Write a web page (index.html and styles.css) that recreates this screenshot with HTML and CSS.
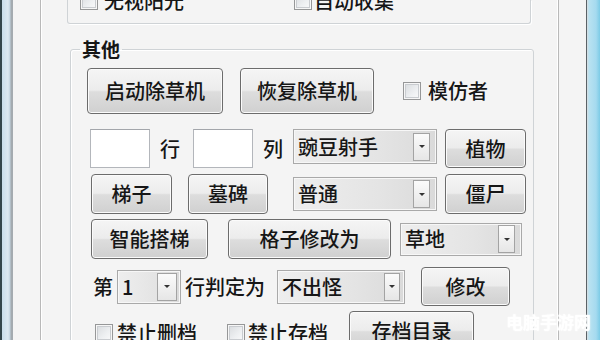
FILE: index.html
```html
<!DOCTYPE html>
<html lang="zh-CN">
<head>
<meta charset="utf-8">
<title>其他</title>
<link rel="stylesheet" href="styles.css">
</head>
<body>
<div class="screen">
  <div class="edge-left"></div>
  <div class="panel">
    <div class="inner">
      <div class="topgroup">
        <div class="toprow">
          <label class="check"><span class="box"></span><span class="txt">无视阳光</span></label>
          <label class="check second"><span class="box"></span><span class="txt">自动收集</span></label>
        </div>
      </div>
      <fieldset class="group">
        <legend>其他</legend>
        <div class="rows">
          <div class="row r1">
            <button class="btn b-start">启动除草机</button>
            <button class="btn b-restore">恢复除草机</button>
            <label class="check imitate"><span class="box"></span><span class="txt">模仿者</span></label>
          </div>
          <div class="row r2">
            <span class="field f1"></span>
            <span class="lbl l-row">行</span>
            <span class="field f2"></span>
            <span class="lbl l-col">列</span>
            <span class="combo c-plant"><span class="ctext">豌豆射手</span><span class="drop"><i></i></span></span>
            <button class="btn b-plant">植物</button>
          </div>
          <div class="row r3">
            <button class="btn b-ladder">梯子</button>
            <button class="btn b-tomb">墓碑</button>
            <span class="combo c-zombie"><span class="ctext">普通</span><span class="drop"><i></i></span></span>
            <button class="btn b-zombie">僵尸</button>
          </div>
          <div class="row r4">
            <button class="btn b-smart">智能搭梯</button>
            <button class="btn b-grid">格子修改为</button>
            <span class="combo c-ground"><span class="ctext">草地</span><span class="drop"><i></i></span></span>
          </div>
          <div class="row r5">
            <span class="lbl l-di">第</span>
            <span class="combo c-num"><span class="ctext">1</span><span class="drop"><i></i></span></span>
            <span class="lbl l-judge">行判定为</span>
            <span class="combo c-spawn"><span class="ctext">不出怪</span><span class="drop"><i></i></span></span>
            <button class="btn b-modify">修改</button>
          </div>
          <div class="row r6">
            <label class="check del"><span class="box"></span><span class="txt">禁止删档</span></label>
            <label class="check save"><span class="box"></span><span class="txt">禁止存档</span></label>
            <button class="btn b-dir">存档目录</button>
          </div>
        </div>
      </fieldset>
    </div>
  </div>
  <div class="edge-right"></div>
  <div class="watermark">电脑手游网</div>
</div>
</body>
</html>
```

FILE: styles.css
```css
* { box-sizing: border-box; }

html, body {
  margin: 0;
  padding: 0;
  width: 600px;
  height: 340px;
  overflow: hidden;
  background: #f3f3f3;
}

.screen {
  position: relative;
  display: flex;
  width: 600px;
  height: 340px;
  overflow: hidden;
  font-family: "Noto Sans CJK SC", "Noto Sans", sans-serif;
  font-size: 20px;
  font-weight: 500;
  line-height: 1;
  color: #161616;
}

.edge-left {
  width: 13px;
  flex: none;
  background: linear-gradient(to right,
    #34464c 0, #34464c 2px,
    #c9deec 2px, #dde9f2 8px, #c2d3df 10px,
    #a4abb0 11px, #a4abb0 13px);
}

.edge-right {
  width: 14px;
  flex: none;
  background: linear-gradient(to right,
    #5b6266 0, #5b6266 1px,
    #d9dde0 1px, #b9e2f1 3px, #a5daef 10px, #7ccbe6 14px);
}

.panel {
  width: 573px;
  flex: none;
  padding: 0 27px;
  background: #f4f4f4;
}

.inner {
  width: 519px;
  height: 340px;
  border-left: 1px solid #b9b9b9;
  border-right: 1px solid #b9b9b9;
  box-shadow: inset 1px 0 0 #ffffff, inset -1px 0 0 #ffffff;
  padding-left: 26px;
  display: flex;
  flex-direction: column;
  align-items: flex-start;
}

/* top (cut-off) group */
.topgroup {
  width: 464px;
  display: flex;
  flex-direction: column;
  border: 1px solid #cfd3d6;
  border-top: none;
  border-radius: 0 0 3px 3px;
  box-shadow: 1px 1px 0 #ffffff;
  padding: 0 0 12px 12px;
}

.toprow {
  display: flex;
  align-items: center;
  height: 20px;
  margin-top: -9px;
}

/* checkbox */
.check {
  display: flex;
  align-items: center;
  height: 20px;
  white-space: nowrap;
}
.check .box {
  width: 18px;
  height: 18px;
  flex: none;
  border: 1px solid #969798;
  background: linear-gradient(135deg, #d6d9dc 0%, #eef0f2 60%, #fbfbfb 100%);
  box-shadow: inset 0 0 0 1px #f6f6f6, inset 0 0 0 2px #c9ccd0;
}
.toprow .check .txt { margin-left: 6px; }
.toprow .second { margin-left: 110px; }
.toprow .second .txt { margin-left: 2px; }

/* "其他" group */
.group {
  width: 464px;
  margin: 15px 0 0 3px;
  padding: 0;
  min-width: 0;
  height: 320px;
  border: 1px solid #cfd3d6;
  border-radius: 3px;
  box-shadow: 1px 1px 0 #ffffff inset;
}
.group legend {
  margin-left: 9px;
  padding: 0 2px;
  line-height: 20px;
  height: 20px;
  font-size: 19px;
  font-weight: 700;
}

.rows {
  padding: 9px 0 0 16px;
  display: flex;
  flex-direction: column;
}

.row {
  display: flex;
  align-items: center;
  white-space: nowrap;
}

/* button */
.btn {
  flex: none;
  font-family: inherit;
  font-size: 20px;
  font-weight: 500;
  line-height: 1;
  color: #161616;
  padding: 0;
  border: 1px solid #6c6c6c;
  border-radius: 4px;
  background: linear-gradient(to bottom, #f5f5f5 0%, #ececec 48%, #dddddd 52%, #d0d0d0 100%);
  box-shadow: inset 0 0 0 1px #fbfbfb;
  height: 40px;
}

/* text field */
.field {
  flex: none;
  width: 60px;
  height: 39px;
  background: #ffffff;
  border: 1px solid #b3b6bb;
  border-top-color: #a3a6ab;
}

.lbl { flex: none; }

/* combobox */
.combo {
  flex: none;
  display: flex;
  align-items: center;
  height: 34px;
  border: 1px solid #a9a9a9;
  background: linear-gradient(to right, #eeeeee 0%, #e4e4e4 60%, #dadada 100%);
  box-shadow: inset 0 0 0 1px #f7f7f7;
}
.combo .ctext {
  flex: 1;
  padding-left: 4px;
}
.combo .drop {
  flex: none;
  width: 17px;
  height: 28px;
  margin-right: 6px;
  border: 1px solid #a3a3a3;
  background: linear-gradient(to bottom, #fbfbfb, #e6e6e6);
  display: flex;
  align-items: center;
  justify-content: center;
}
.combo .drop i {
  display: block;
  width: 0;
  height: 0;
  border-left: 3px solid transparent;
  border-right: 3px solid transparent;
  border-top: 3px solid #333333;
}

/* row 1 */
.r1 { height: 46px; }
.b-start { width: 136px; height: 46px; }
.b-restore { width: 134px; height: 46px; margin-left: 17px; }
.imitate { margin-left: 29px; }
.imitate .txt { margin-left: 7px; }

/* row 2 */
.r2 { height: 39px; margin-top: 15px; }
.f1 { margin-left: 3px; }
.l-row { margin-left: 10px; width: 20px; }
.f2 { margin-left: 13px; }
.l-col { margin-left: 10px; width: 20px; }
.c-plant { margin-left: 10px; width: 144px; height: 35px; align-self: flex-start; }
.b-plant { margin-left: 8px; width: 81px; height: 39px; }

/* row 3 */
.r3 { height: 40px; margin-top: 6px; }
.b-ladder { margin-left: 4px; width: 81px; }
.b-tomb { margin-left: 16px; width: 80px; }
.c-zombie { margin-left: 25px; width: 144px; }
.b-zombie { margin-left: 8px; width: 81px; }

/* row 4 */
.r4 { height: 40px; margin-top: 5px; }
.b-smart { margin-left: 4px; width: 117px; }
.b-grid { margin-left: 20px; width: 163px; }
.c-ground { margin-left: 9px; width: 122px; height: 33px; }

/* row 5 */
.r5 { height: 39px; margin-top: 8px; }
.l-di { margin-left: 6px; width: 20px; }
.c-num { margin-left: 4px; width: 64px; }
.c-num .drop { width: 20px; margin-right: 3px; }
.l-judge { margin-left: 4px; width: 80px; }
.c-spawn { margin-left: 12px; width: 128px; }
.c-spawn .drop { width: 16px; margin-right: 4px; }
.b-modify { margin-left: 16px; width: 89px; height: 39px; }

/* row 6 */
.r6 { height: 40px; margin-top: 5px; align-items: flex-start; }
.del { margin-left: 8px; margin-top: 12px; }
.del .txt { margin-left: 4px; }
.save { margin-left: 30px; margin-top: 12px; }
.save .txt { margin-left: 3px; }
.b-dir { margin-left: 21px; width: 125px; }

/* watermark overlay */
.watermark {
  position: absolute;
  left: 506px;
  top: 313px;
  font-size: 17px;
  font-weight: 700;
  color: rgba(255, 255, 255, 0.95);
  text-shadow: 0 0 2px rgba(255, 255, 255, 0.9);
  filter: blur(0.5px);
}
```
